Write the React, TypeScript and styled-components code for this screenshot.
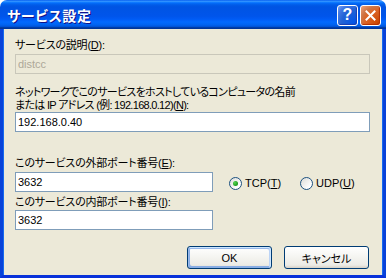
import React from "react";
import styled, { createGlobalStyle, css } from "styled-components";

const Global = createGlobalStyle`
  html, body { margin: 0; padding: 0; background: #ffffff; }
  body { font-family: "Liberation Sans", "Noto Sans CJK JP", sans-serif; }
`;

const FONT = `"Liberation Sans", "Noto Sans CJK JP", sans-serif`;

const Window = styled.div`
  width: 386px;
  height: 278px;
  display: flex;
  flex-direction: column;
  box-sizing: border-box;
`;

const TitleBar = styled.div`
  height: 29px;
  flex: none;
  display: flex;
  align-items: center;
  justify-content: space-between;
  padding: 0 5px 0 7px;
  box-sizing: border-box;
  border-radius: 7px 7px 0 0;
  background: linear-gradient(
    to bottom,
    #0058ee 0%,
    #3593ff 4%,
    #288eff 6%,
    #127dff 8%,
    #036ffc 10%,
    #0262ee 14%,
    #0057e5 20%,
    #0054e3 24%,
    #0055eb 56%,
    #005bf5 66%,
    #026afe 76%,
    #0062ef 86%,
    #0052d6 92%,
    #0040ab 94%,
    #003092 100%
  );
`;

const Title = styled.div`
  color: #ffffff;
  font-family: "Noto Sans CJK JP", sans-serif;
  font-size: 14px;
  font-weight: 700;
  font-feature-settings: "palt";
  text-shadow: 1px 1px #0f1089;
  letter-spacing: 0.6px;
`;

const Controls = styled.div`
  display: flex;
  gap: 2px;
  margin-top: 1px;
`;

const CtrlButton = styled.div<{ $kind: "help" | "close" }>`
  width: 21px;
  height: 21px;
  box-sizing: border-box;
  border: 1px solid #ffffff;
  border-radius: 3px;
  display: flex;
  align-items: center;
  justify-content: center;
  color: #ffffff;
  font-family: "Liberation Sans", sans-serif;
  font-weight: 700;
  font-size: 16px;
  ${(p) =>
    p.$kind === "help"
      ? css`
          background: radial-gradient(circle at 90% 90%, #0054e9 0%, #2263d5 55%, #4479e4 80%, #7fa7f5 100%);
          box-shadow: inset -1px -1px 1px #1b3fb0;
        `
      : css`
          background: radial-gradient(circle at 90% 90%, #cc4600 0%, #dc6527 55%, #cd7546 70%, #f0a27a 100%);
          box-shadow: inset -1px -1px 1px #b23000;
        `}
`;

const Body = styled.div`
  flex: 1;
  display: flex;
  flex-direction: column;
  background: #ece9d8;
  border-left: 3px solid #0842d9;
  border-right: 3px solid #0842d9;
  border-bottom: 3px solid #0831d9;
  box-shadow: inset 1px 0 #166aee, inset -1px 0 #166aee;
  padding: 0 13px 0 12px;
`;

const Label = styled.div<{ $mt: number; $ls?: number }>`
  margin-top: ${(p) => p.$mt}px;
  font-family: ${FONT};
  font-size: 11px;
  line-height: 13px;
  letter-spacing: ${(p) => p.$ls ?? -0.2}px;
  color: #000000;
  font-feature-settings: "palt";
  white-space: nowrap;

  u {
    text-decoration: underline;
    text-underline-offset: 1px;
  }
`;

const TextBox = styled.input<{ $mt: number; $w?: number }>`
  margin: ${(p) => p.$mt}px 0 0 0;
  width: ${(p) => (p.$w ? `${p.$w}px` : "100%")};
  height: 20px;
  box-sizing: border-box;
  border: 1px solid #7f9db9;
  background: #ffffff;
  padding: 0 2px;
  font-family: ${FONT};
  font-size: 11px;
  color: #000000;
  outline: none;

  &:disabled {
    background: #ece9d8;
    border-color: #c9c7ba;
    color: #aca899;
  }
`;

const PortRow = styled.div`
  display: flex;
  align-items: center;
  margin-top: 2px;
`;

const RadioGroup = styled.div`
  display: flex;
  align-items: center;
  gap: 19px;
  margin-left: 16px;
  margin-top: 2px;
`;

const RadioItem = styled.label`
  display: flex;
  align-items: center;
  gap: 3px;
  font-family: ${FONT};
  font-size: 11px;
  color: #000000;

  u {
    text-decoration: underline;
    text-underline-offset: 1px;
  }
`;

const RadioCircle = styled.span<{ $checked?: boolean }>`
  width: 13px;
  height: 13px;
  box-sizing: border-box;
  border-radius: 50%;
  border: 1px solid #1c5180;
  background: linear-gradient(135deg, #dcdcd7 0%, #ffffff 80%);
  display: flex;
  align-items: center;
  justify-content: center;

  &::after {
    content: "";
    display: ${(p) => (p.$checked ? "block" : "none")};
    width: 5px;
    height: 5px;
    border-radius: 50%;
    background: radial-gradient(circle at 35% 35%, #55d551 0%, #21a121 60%, #1a8a1a 100%);
  }
`;

const ButtonRow = styled.div`
  display: flex;
  justify-content: flex-end;
  gap: 12px;
  margin-top: 16px;
  padding-right: 1px;
`;

const PushButton = styled.div<{ $default?: boolean }>`
  width: 85px;
  flex: none;
  height: 23px;
  box-sizing: border-box;
  border: 1px solid #003c74;
  border-radius: 3px;
  display: flex;
  align-items: center;
  justify-content: center;
  font-family: ${FONT};
  font-size: 11px;
  font-feature-settings: "palt";
  color: #000000;
  background: linear-gradient(180deg, #ffffff 0%, #f4f4f0 50%, #ecebe6 86%, #d6d0c5 100%);
  ${(p) =>
    p.$default &&
    css`
      box-shadow: inset -1px 1px #cee7ff, inset 1px 2px #98b8ea, inset -2px 2px #bcd4f6,
        inset 1px -1px #89ade4, inset 2px -2px #89ade4;
    `}
`;

export default function App() {
  return (
    <>
      <Global />
      <Window>
        <TitleBar>
          <Title>サービス設定</Title>
          <Controls>
            <CtrlButton $kind="help">?</CtrlButton>
            <CtrlButton $kind="close">
              <svg width="11" height="11" viewBox="0 0 11 11">
                <path d="M1.5 1.5 L9.5 9.5 M9.5 1.5 L1.5 9.5" stroke="#fff" strokeWidth="2" strokeLinecap="square" />
              </svg>
            </CtrlButton>
          </Controls>
        </TitleBar>
        <Body>
          <Label $mt={10}>
            サービスの説明(<u>D</u>):
          </Label>
          <TextBox $mt={2} disabled defaultValue="distcc" />
          <Label $mt={12} $ls={-0.7}>
            ネットワークでこのサービスをホストしているコンピュータの名前
            <br />
            または IP アドレス (例: 192.168.0.12)(<u>N</u>):
          </Label>
          <TextBox $mt={0} readOnly defaultValue="192.168.0.40" />
          <Label $mt={25}>
            このサービスの外部ポート番号(<u>E</u>):
          </Label>
          <PortRow>
            <TextBox $mt={0} $w={198} readOnly defaultValue="3632" />
            <RadioGroup>
              <RadioItem>
                <RadioCircle $checked />
                <span>
                  TCP(<u>T</u>)
                </span>
              </RadioItem>
              <RadioItem>
                <RadioCircle />
                <span>
                  UDP(<u>U</u>)
                </span>
              </RadioItem>
            </RadioGroup>
          </PortRow>
          <Label $mt={4}>
            このサービスの内部ポート番号(<u>I</u>):
          </Label>
          <TextBox $mt={1} $w={198} readOnly defaultValue="3632" />
          <ButtonRow>
            <PushButton $default>OK</PushButton>
            <PushButton>キャンセル</PushButton>
          </ButtonRow>
        </Body>
      </Window>
    </>
  );
}
